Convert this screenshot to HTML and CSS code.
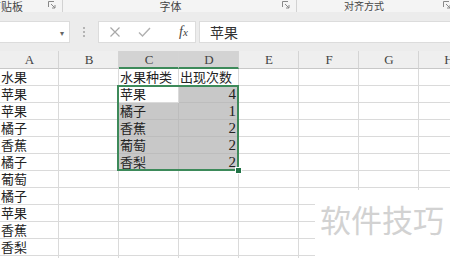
FILE: index.html
```html
<!DOCTYPE html>
<html>
<head>
    <title>软件技巧</title>
    <link rel="stylesheet" href="styles.css">
</head>
<body>
    <div class="ribbon">
        <div class="group group-clip">
            <span class="group-label first-label">剪贴板</span>
            <svg class="launcher" width="8" height="8" viewBox="0 0 8 8"><path d="M0.5 6 V0.5 H6" fill="none" stroke="#888" stroke-width="1"/><path d="M3 3 L7 7 M4 7 H7 V4" fill="none" stroke="#888" stroke-width="1"/></svg>
        </div>
        <div class="group group-font">
            <span class="group-label">字体</span>
            <svg class="launcher" width="8" height="8" viewBox="0 0 8 8"><path d="M0.5 6 V0.5 H6" fill="none" stroke="#888" stroke-width="1"/><path d="M3 3 L7 7 M4 7 H7 V4" fill="none" stroke="#888" stroke-width="1"/></svg>
        </div>
        <div class="group group-align">
            <span class="group-label">对齐方式</span>
            <svg class="launcher" width="8" height="8" viewBox="0 0 8 8"><path d="M0.5 6 V0.5 H6" fill="none" stroke="#888" stroke-width="1"/><path d="M3 3 L7 7 M4 7 H7 V4" fill="none" stroke="#888" stroke-width="1"/></svg>
        </div>
    </div>

    <div class="formula-bar">
        <div class="name-box"><span class="drop">▾</span></div>
        <div class="grip"><i></i><i></i><i></i></div>
        <div class="fx-box">
            <svg width="12" height="12" viewBox="0 0 12 12"><path d="M1.5 1.5 L10.5 10.5 M10.5 1.5 L1.5 10.5" stroke="#a8a8a8" stroke-width="1.2" fill="none"/></svg>
            <svg width="13" height="12" viewBox="0 0 13 12"><path d="M1 6.5 L4.5 10 L12 2" stroke="#b0b0b0" stroke-width="1.4" fill="none"/></svg>
            <span class="fx">f<small>x</small></span>
        </div>
        <div class="formula-input">苹果</div>
    </div>

    <div class="sheet" id="sheet">
        <div class="selection"></div>
        <div class="fill-handle"></div>
    </div>

    <div class="watermark">软件技巧</div>

    <script>
        // column A list and the summary table in C:D
        const fruits = ["水果", "苹果", "苹果", "橘子", "香蕉", "橘子", "葡萄", "橘子", "苹果", "香蕉", "香梨", ""];
        const summary = [["水果种类", "出现次数"], ["苹果", 4], ["橘子", 1], ["香蕉", 2], ["葡萄", 2], ["香梨", 2]];
        const cols = ["A", "B", "C", "D", "E", "F", "G", "H"];

        const sheet = document.getElementById("sheet");
        let html = "";
        for (const c of cols) {
            const sel = (c === "C" || c === "D") ? " head-sel" : "";
            html += `<div class="cell head${sel}">${c}</div>`;
        }
        fruits.forEach((fruit, r) => {
            for (const c of cols) {
                let text = "";
                let cls = "cell";
                if (c === "A") text = fruit;
                if (summary[r] && c === "C") text = summary[r][0];
                if (summary[r] && c === "D") {
                    text = summary[r][1];
                    if (r > 0) cls += " num";
                }
                if (r >= 1 && r <= 5 && (c === "C" || c === "D")) {
                    cls += (r === 1 && c === "C") ? " active" : " sel";
                }
                html += `<div class="${cls}">${text}</div>`;
            }
        });
        sheet.insertAdjacentHTML("beforeend", html);
    </script>
</body>
</html>
```

FILE: styles.css
```css
body {
    margin: 0;
    width: 450px;
    height: 258px;
    overflow: hidden;
    position: relative;
    background-color: #ececec;
    font-family: "Noto Sans CJK SC", sans-serif;
    color: #222;
}
.ribbon {
    display: flex;
    height: 12px;
    background-color: #f4f4f4;
    overflow: hidden;
}
.group {
    display: flex;
    align-items: center;
    border-right: 1px solid #d2d2d2;
    box-sizing: border-box;
    height: 12px;
    flex-shrink: 0;
}
.group-label {
    flex: 1;
    text-align: center;
    font-size: 11px;
    line-height: 12px;
    color: #444;
    white-space: nowrap;
}
.first-label {
    flex: none;
    margin-left: -10px;
    margin-right: auto;
}
.launcher {
    margin-right: 6px;
    margin-top: -2px;
}
.group-clip {
    width: 63px;
}
.group-font {
    width: 234px;
}
.group-font .group-label {
    padding-right: 4px;
}
.group-align {
    width: 160px;
    border-right: none;
}
.group-align .group-label {
    font-size: 10px;
    padding-right: 12px;
}
.formula-bar {
    display: flex;
    align-items: center;
    height: 24px;
    margin-top: 8px;
    margin-bottom: 7px;
}
.name-box {
    width: 70px;
    height: 22px;
    background-color: white;
    border: 1px solid #dcdcdc;
    border-left: none;
    box-sizing: border-box;
    display: flex;
    align-items: center;
    justify-content: flex-end;
}
.drop {
    font-size: 8px;
    color: #666;
    margin-right: 5px;
}
.grip {
    width: 28px;
    display: flex;
    flex-direction: column;
    align-items: center;
    gap: 2px;
}
.grip i {
    width: 2px;
    height: 2px;
    background-color: #b4b4b4;
}
.fx-box {
    width: 98px;
    height: 22px;
    background-color: white;
    border: 1px solid #dcdcdc;
    box-sizing: border-box;
    display: flex;
    align-items: center;
    gap: 17px;
    padding-left: 10px;
}
.fx {
    font-family: "Liberation Serif", serif;
    font-style: italic;
    font-size: 14px;
    color: #444;
    margin-left: 11px;
}
.fx small {
    font-size: 11px;
}
.formula-input {
    flex: 1;
    height: 22px;
    margin-left: 3px;
    background-color: white;
    border: 1px solid #dcdcdc;
    border-right: none;
    box-sizing: border-box;
    font-size: 14px;
    line-height: 20px;
    padding-left: 10px;
    color: #333;
}
.sheet {
    position: relative;
    display: grid;
    grid-template-columns: 59px repeat(7, 60px);
    grid-template-rows: 18px;
    grid-auto-rows: 17px;
    background-color: white;
}
.cell {
    border-right: 1px solid #dadada;
    border-bottom: 1px solid #dadada;
    box-sizing: border-box;
    font-size: 13px;
    line-height: 16px;
    padding-left: 1px;
    white-space: nowrap;
    overflow: hidden;
}
.head {
    background-color: #efefef;
    font-family: "Liberation Serif", serif;
    font-size: 13px;
    color: #444;
    text-align: center;
    line-height: 17px;
    border-right-color: #d4d4d4;
    border-bottom-color: #c8c8c8;
}
.head-sel {
    background-color: #d3d3d3;
    border-bottom: 2px solid #3d8a5a;
}
.sel {
    background-color: #c8c8c8;
    border-color: #bdbdbd;
}
.active {
    background-color: white;
}
.num {
    font-family: "Liberation Serif", serif;
    font-size: 15px;
    text-align: right;
    padding-right: 2px;
}
.selection {
    position: absolute;
    left: 117px;
    top: 34px;
    width: 122px;
    height: 86px;
    border: 2px solid #3d8a5a;
    box-sizing: border-box;
}
.fill-handle {
    position: absolute;
    left: 235px;
    top: 116px;
    width: 5px;
    height: 5px;
    background-color: #217346;
    border: 1px solid white;
}
.watermark {
    position: absolute;
    left: 315px;
    top: 190px;
    right: 0;
    bottom: 0;
    background-color: white;
    font-size: 31px;
    line-height: 40px;
    padding-left: 5px;
    padding-top: 9px;
    color: #d2d2d2;
    white-space: nowrap;
}
```
